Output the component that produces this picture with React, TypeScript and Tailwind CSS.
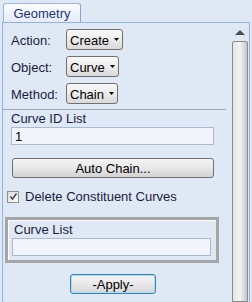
import React from 'react';

function Dropdown({ label, width }: { label: string; width: string }) {
  return (
    <div
      className={`${width} h-[21px] flex items-center justify-between pl-[3px] pr-[3px] rounded-[3px] border border-[#707070] bg-gradient-to-b from-[#f8f8f8] via-[#ececec] to-[#d9d9d9] text-black`}
    >
      <span className="pt-px">{label}</span>
      <svg width="5" height="3" viewBox="0 0 5 3">
        <path d="M0 0 H5 L2.5 3 Z" fill="#000" />
      </svg>
    </div>
  );
}

function Field({ value, className }: { value?: string; className: string }) {
  return (
    <div className={`${className} h-[18px] flex items-center pl-[3px] border border-[#a9b9d3] bg-[#f1f5fb] text-black`}>
      {value}
    </div>
  );
}

export default function App() {
  const rows = [
    { label: 'Action:', value: 'Create', width: 'w-[57px]' },
    { label: 'Object:', value: 'Curve', width: 'w-[53px]' },
    { label: 'Method:', value: 'Chain', width: 'w-[52px]' },
  ];

  return (
    <div
      className="w-[252px] h-[302px] overflow-hidden bg-[#dfe8f5] text-[13px] leading-[15px] text-[#1c1c3c]"
      style={{ fontFamily: '"Liberation Sans", Arial, sans-serif' }}
    >
      {/* tab strip */}
      <div className="pt-[3px] pl-[3px]">
        <div className="w-[78px] h-[19px] flex items-start justify-center pt-[2px] rounded-t-[3px] border border-b-0 border-[#9ab5df] border-r-[#86a4d2] bg-gradient-to-b from-[#fbfdff] to-[#e4ecf8] text-[#22337a]">
          Geometry
        </div>
      </div>

      {/* panel */}
      <div className="ml-[2px] w-[248px] h-[280px] flex border-l border-t border-r border-[#92b2e2]">
        <div className="w-[229px] flex flex-col">
          <div className="mt-[6px] flex flex-col gap-[6px]">
            {rows.map((r) => (
              <div key={r.label} className="h-[21px] flex items-center">
                <span className="w-[63px] pl-[8px] pt-px">{r.label}</span>
                <Dropdown label={r.value} width={r.width} />
              </div>
            ))}
          </div>

          <div className="mt-[5px] mr-[6px] h-px bg-[#a3a7ad]" />

          <div className="mt-[1px] pl-[8px]">Curve ID List</div>
          <Field value="1" className="mt-[1px] ml-[8px] w-[203px]" />

          <button className="mt-[13px] ml-[9px] w-[202px] h-[20px] flex items-center justify-center rounded-[3px] border border-[#707070] bg-gradient-to-b from-[#f4f4f4] via-[#e8e8e8] to-[#d3d3d3] text-black">
            Auto Chain...
          </button>

          <div className="mt-[11px] flex items-center">
            <div className="ml-[4px] w-[12px] h-[12px] flex items-center justify-center border border-[#8e8f8f] bg-gradient-to-br from-[#dcdcdc] to-[#fbfbfb]">
              <svg width="9" height="9" viewBox="0 0 9 9">
                <path d="M1.5 4.5 L3.5 7 L7.5 1.5" stroke="#4a4a5a" strokeWidth="1.6" fill="none" />
              </svg>
            </div>
            <span className="ml-[6px]">Delete Constituent Curves</span>
          </div>

          <div className="mt-[13px] ml-[2px] w-[214px] h-[46px] flex flex-col border-[3px] border-[#a5a5a5] shadow-[inset_1px_1px_0_#ffffff]">
            <div className="mt-[2px] pl-[6px]">Curve List</div>
            <Field className="mt-[1px] ml-[4px] w-[199px]" />
          </div>

          <button className="mt-[11px] ml-[67px] w-[86px] h-[20px] flex items-center justify-center rounded-[3px] border border-[#3c7fb1] shadow-[inset_0_0_0_1px_#a6dcf4] bg-gradient-to-b from-[#f4f4f4] via-[#e9e9e9] to-[#d6d6d6] text-black">
            -Apply-
          </button>
        </div>

        {/* scrollbar */}
        <div className="w-[17px] flex flex-col">
          <div className="h-[18px] flex items-start justify-center pt-[7px] pr-[1px]">
            <svg width="10" height="5" viewBox="0 0 10 5">
              <path d="M0 5 L5 0 L10 5 Z" fill="#4d4d4d" />
            </svg>
          </div>
          <div className="w-[16px] flex-1 rounded-t-[2px] border border-[#8a8a8a] bg-gradient-to-r from-[#e6e6e6] via-[#f3f3f3] to-[#c6c6c6]" />
        </div>
      </div>
    </div>
  );
}
